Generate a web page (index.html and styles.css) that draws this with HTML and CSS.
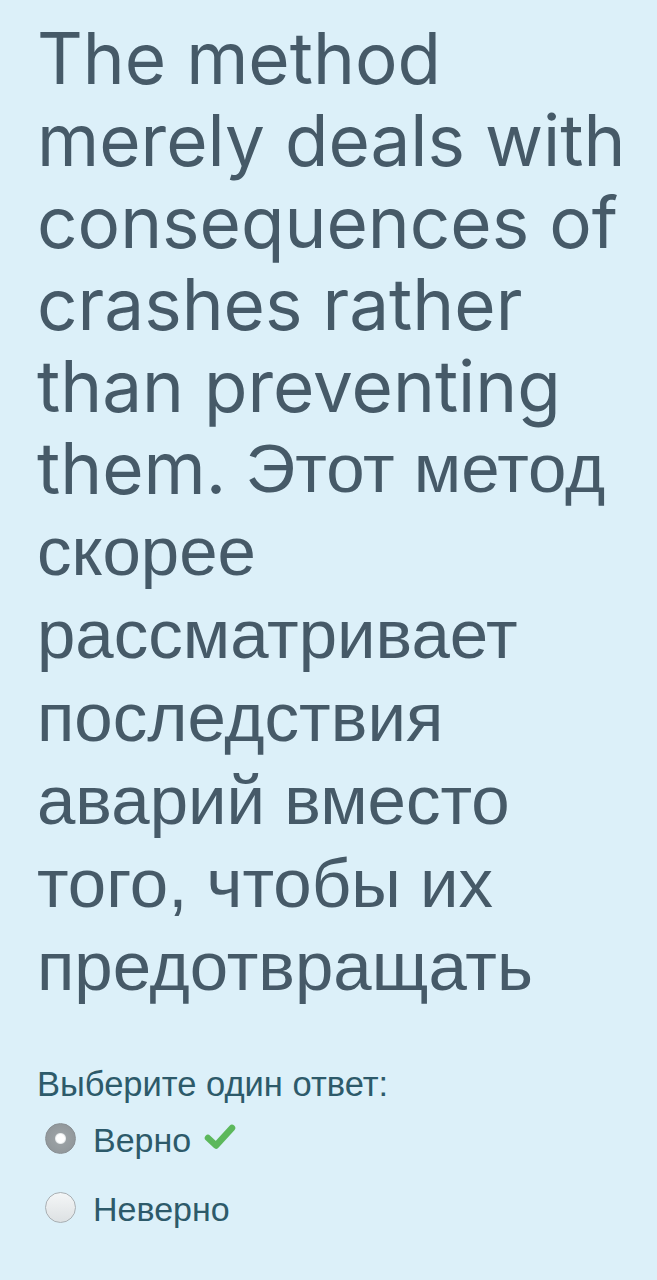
FILE: index.html
```html
<!DOCTYPE html>
<html lang="ru">
<head>
<meta charset="utf-8">
<title>Вопрос</title>
<link rel="stylesheet" href="styles.css">
</head>
<body>
<main class="que">
  <div class="qtext">
    <span class="lat">The method<br>merely deals with<br>consequences of<br>crashes rather<br>than preventing<br>them.</span> <span class="cyr">Этот метод<br>скорее<br>рассматривает<br>последствия<br>аварий вместо<br>того, чтобы их<br>предотвращать</span>
  </div>
  <div class="answer-block">
    <div class="prompt">Выберите один ответ:</div>
    <div class="option">
      <span class="radio checked"></span>
      <span class="label">Верно</span>
      <svg class="check" viewBox="0 0 32 28" width="32" height="28" aria-hidden="true">
        <path d="M4 15 L12 22.5 L28 5" fill="none" stroke="#5cb85c" stroke-width="6.5" stroke-linecap="round" stroke-linejoin="round"/>
      </svg>
    </div>
    <div class="option">
      <span class="radio"></span>
      <span class="label">Неверно</span>
    </div>
  </div>
</main>
</body>
</html>
```

FILE: styles.css
```css
html, body {
  margin: 0;
  padding: 0;
  background: #dcf0f9;
}
.que {
  padding: 17px 20px 0 37px;
  min-height: 1280px;
  box-sizing: border-box;
}
.qtext {
  color: #465a68;
  font-family: "Liberation Sans", Arial, sans-serif;
  font-size: 70px;
  line-height: 82px;
  white-space: nowrap;
}
.lat {
  font-family: Inter, "Open Sans", sans-serif;
  font-size: 71px;
  vertical-align: top;
}
.cyr {
  font-family: "Liberation Sans", Arial, sans-serif;
  font-size: 69px;
}
.answer-block {
  margin-top: 56px;
  font-family: "Liberation Sans", Arial, sans-serif;
  color: #2d5a6a;
}
.prompt {
  font-size: 34.5px;
  line-height: 40px;
}
.option {
  display: flex;
  align-items: center;
  gap: 17px;
  height: 40px;
  line-height: 40px;
  margin-top: 16px;
  padding-left: 8px;
  font-size: 34px;
}
.option + .option {
  margin-top: 29px;
}
.radio {
  width: 31px;
  height: 31px;
  border-radius: 50%;
  box-sizing: border-box;
  border: 1px solid #a9afb3;
  background: linear-gradient(#f4f6f7, #dde1e3);
  flex: none;
  margin-bottom: 4px;
}
.radio.checked {
  border: 1px solid #8a9094;
  background: radial-gradient(circle at 50% 50%, #ffffff 0 4px, #e6e9ea 5px, #9aa0a3 6px, #8c9296 100%);
}
.check {
  margin-left: -4px;
  margin-bottom: 6px;
  flex: none;
}
```
